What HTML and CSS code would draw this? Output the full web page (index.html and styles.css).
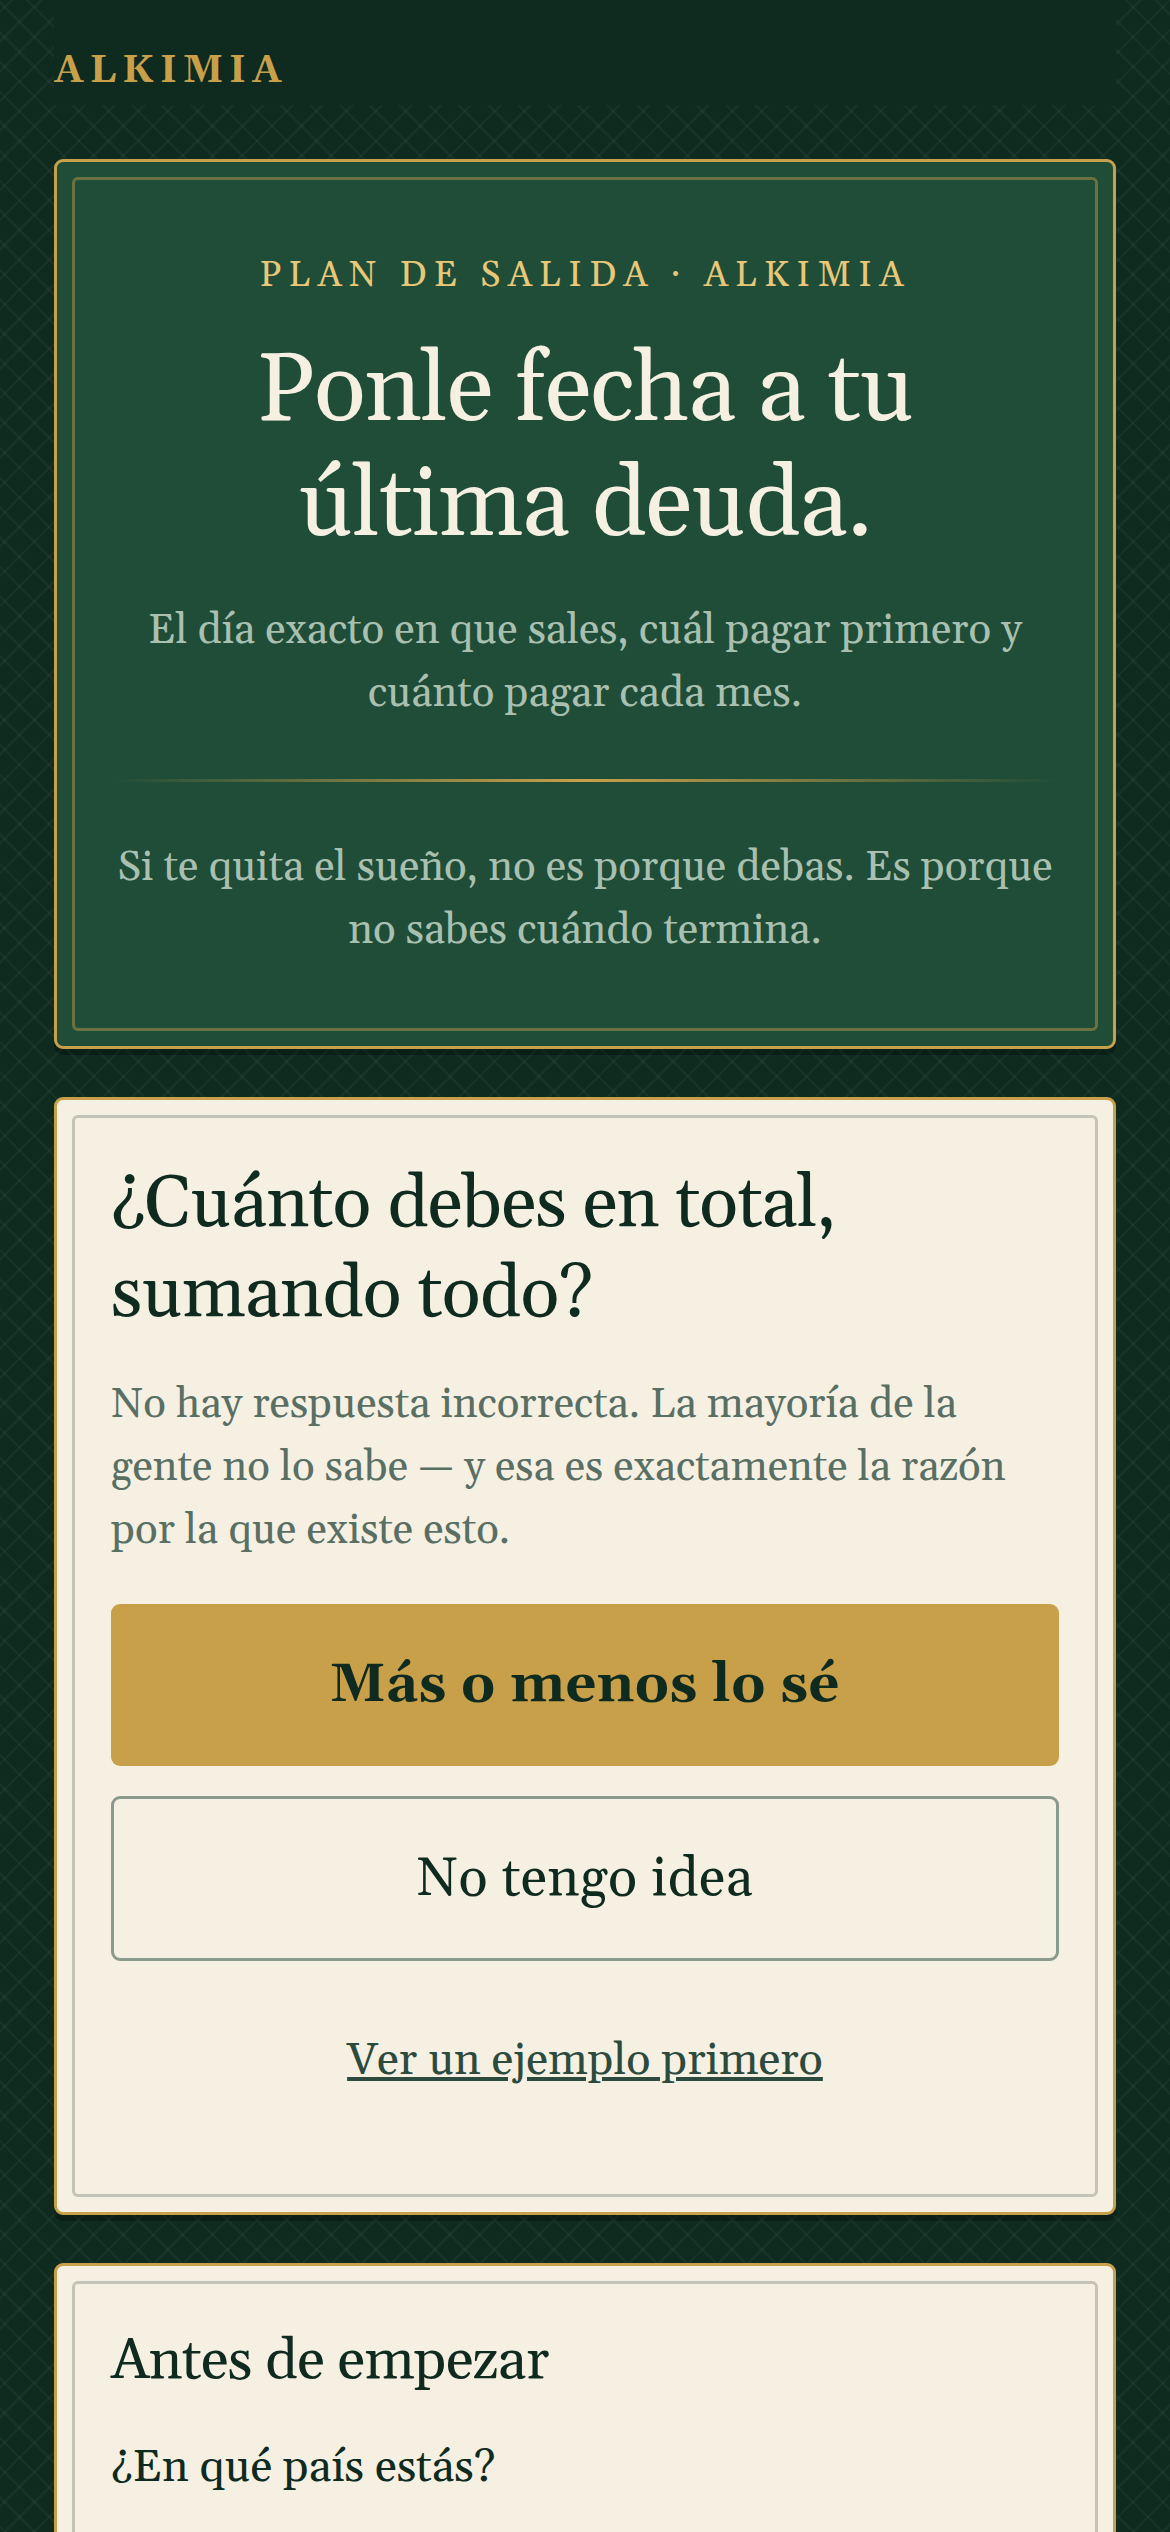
FILE: index.html
```html
<!DOCTYPE html>
<html lang="es">
<head>
  <meta charset="UTF-8" />
  <meta name="viewport" content="width=device-width, initial-scale=1.0" />
  <title>Alkimia – Plan de salida</title>
  <link rel="stylesheet" href="styles.css">
</head>
<body>
  <div class="page">
    <header class="topbar">
      <span class="brand">ALKIMIA</span>
    </header>

    <main class="stack">
      <!-- Hero -->
      <section class="card card-hero">
        <div class="card-inner hero-inner">
          <p class="eyebrow">PLAN DE SALIDA · ALKIMIA</p>
          <h1 class="hero-title">Ponle fecha a tu última deuda.</h1>
          <p class="hero-text">El día exacto en que sales, cuál pagar primero y cuánto pagar cada mes.</p>
          <div class="hero-rule"></div>
          <p class="hero-text">Si te quita el sueño, no es porque debas. Es porque no sabes cuándo termina.</p>
        </div>
      </section>

      <!-- First question -->
      <section class="card">
        <div class="card-inner">
          <h2 class="question">¿Cuánto debes en total, sumando todo?</h2>
          <p class="muted">No hay respuesta incorrecta. La mayoría de la gente no lo sabe — y esa es exactamente la razón por la que existe esto.</p>
          <div class="actions">
            <button class="btn btn-primary">Más o menos lo sé</button>
            <button class="btn btn-outline">No tengo idea</button>
          </div>
          <a class="link" href="#">Ver un ejemplo primero</a>
        </div>
      </section>

      <!-- Before starting -->
      <section class="card">
        <div class="card-inner">
          <h3 class="subhead">Antes de empezar</h3>
          <label class="field-label">¿En qué país estás?</label>
          <p class="field-help">Si vas a pagar, importa tu moneda y el país.</p>
        </div>
      </section>
    </main>
  </div>
</body>
</html>
```

FILE: styles.css
```css
* {
  margin: 0;
  padding: 0;
  box-sizing: border-box;
}
html, body {
  height: 2532px;
  overflow: hidden;
}
body {
  font-family: Gelasio, "Liberation Serif", serif;
  color: #0f2a1f;
  background-color: #0f2a1f;
  /* Diagonal lattice, stops offset so the crossings land where they should */
  background-image:
    repeating-linear-gradient(45deg, transparent 0 2.25px, rgba(255, 255, 255, 0.035) 2.25px 4.75px, transparent 4.75px 21px),
    repeating-linear-gradient(-45deg, transparent 0 4.05px, rgba(255, 255, 255, 0.035) 4.05px 6.55px, transparent 6.55px 21px);
}
.page {
  padding: 0 54px;
}
/* Top bar */
.topbar {
  height: 105px;
  padding-top: 42px;
  background: #0f2a1f;
}
.brand {
  display: block;
  color: #c8a04a;
  font-size: 39px;
  font-weight: 700;
  line-height: 58px;
  letter-spacing: 5.85px;
}
.stack {
  display: flex;
  flex-direction: column;
  gap: 48px;
  padding-top: 54px;
}
/* Cards: gold outer border plus thin inner frame */
.card {
  background: #f6f0e2;
  border: 3px solid #c8a04a;
  border-radius: 9px;
  padding: 15px;
  box-shadow: 0 6px 0 rgba(0, 0, 0, 0.25);
}
.card-inner {
  border: 3px solid rgba(15, 42, 31, 0.22);
  border-radius: 6px;
  padding: 42px 36px 99px;
}
.card-hero {
  background: #1f4d38;
}
.card-hero .card-inner {
  border-color: rgba(200, 160, 74, 0.45);
}
.hero-inner {
  padding: 69px 36px 66px;
  text-align: center;
}
.eyebrow {
  color: #e8c878;
  font-size: 36px;
  line-height: 54px;
  letter-spacing: 7.2px;
}
.hero-title {
  color: #f6f0e2;
  font-size: 96px;
  font-weight: 400;
  line-height: 115.2px;
  letter-spacing: -0.96px;
  margin-top: 32px;
  padding: 0 60px;
}
.hero-text {
  color: #a9c0b0;
  font-size: 42px;
  line-height: 63px;
}
.hero-title + .hero-text {
  margin-top: 34px;
}
.hero-rule {
  height: 3px;
  margin: 54px 0;
  background: linear-gradient(90deg, transparent, #c8a04a, transparent);
}
.question {
  font-size: 72px;
  font-weight: 400;
  line-height: 90px;
  letter-spacing: -0.72px;
}
.muted {
  color: #5a6f64;
  font-size: 42px;
  line-height: 63px;
  margin-top: 33px;
}
.actions {
  display: flex;
  flex-direction: column;
  gap: 30px;
  margin-top: 42px;
}
.btn {
  font-family: inherit;
  font-size: 54px;
  letter-spacing: 0.54px;
  border-radius: 9px;
  color: #0f2a1f;
}
.btn-primary {
  height: 162px;
  background: #c8a04a;
  border: 0;
  font-weight: 700;
}
.btn-outline {
  height: 165px;
  background: transparent;
  border: 3px solid #8a9a8c;
  font-weight: 400;
}
.link {
  display: block;
  margin-top: 66px;
  color: #2d4a3e;
  font-size: 45px;
  line-height: 67.5px;
  text-align: center;
}
.subhead {
  font-size: 57px;
  font-weight: 400;
  line-height: 71px;
  letter-spacing: -0.57px;
}
.field-label {
  display: block;
  margin-top: 37px;
  font-size: 45px;
  line-height: 67.5px;
}
.field-help {
  color: #5a6f64;
  font-size: 42px;
  line-height: 63px;
  margin-top: 27px;
}
```
